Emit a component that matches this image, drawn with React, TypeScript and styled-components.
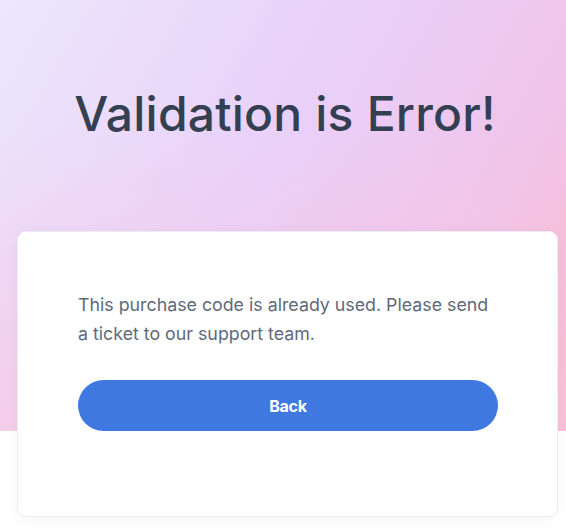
import React from "react";
import styled, { createGlobalStyle } from "styled-components";

const Global = createGlobalStyle`
  html, body { margin: 0; padding: 0; background: #ffffff; }
  body { font-family: Inter, "Noto Sans", sans-serif; -webkit-font-smoothing: antialiased; }
  * { box-sizing: border-box; }
`;

const Page = styled.div`
  width: 566px;
  min-height: 532px;
  background: #ffffff;
`;

const Hero = styled.section`
  height: 431px;
  background:
    linear-gradient(180deg, rgba(253, 205, 226, 0) 0%, rgba(253, 205, 226, 0) 30%, rgba(252, 200, 222, 0.6) 100%),
    linear-gradient(120deg, #ece7fc 0%, #e9d0f9 45%, #f0c4ea 75%, #f8b6cb 100%);
  display: flex;
  justify-content: center;
  padding-top: 82px;
  padding-left: 4px;
`;

const Title = styled.h1`
  margin: 0;
  font-family: Inter, "Noto Sans", sans-serif;
  font-weight: 500;
  font-size: 48px;
  line-height: 64px;
  letter-spacing: 0.2px;
  color: #343f52;
`;

const Card = styled.div`
  margin: -200px 8px 0 17px;
  height: 286px;
  background: #ffffff;
  border: 1px solid #ececf2;
  border-radius: 9px;
  box-shadow: 0 4px 16px rgba(30, 34, 40, 0.04);
  padding: 58px 60px 0 60px;
  display: flex;
  flex-direction: column;
  position: relative;
`;

const Message = styled.p`
  margin: 0;
  font-family: Inter, "Noto Sans", sans-serif;
  font-size: 17.8px;
  line-height: 29px;
  color: #60697b;
  letter-spacing: 0;
`;

const BackButton = styled.button`
  margin-top: 32px;
  width: 420px;
  height: 51px;
  border: none;
  border-radius: 26px;
  background: #3f78e0;
  color: #ffffff;
  font-family: Inter, "Noto Sans", sans-serif;
  font-weight: 700;
  font-size: 16px;
  letter-spacing: -0.3px;
  cursor: pointer;
`;

export default function App() {
  return (
    <Page>
      <Global />
      <Hero>
        <Title>Validation is Error!</Title>
      </Hero>
      <Card>
        <Message>
          This purchase code is already used. Please send a ticket to our support team.
        </Message>
        <BackButton>Back</BackButton>
      </Card>
    </Page>
  );
}
